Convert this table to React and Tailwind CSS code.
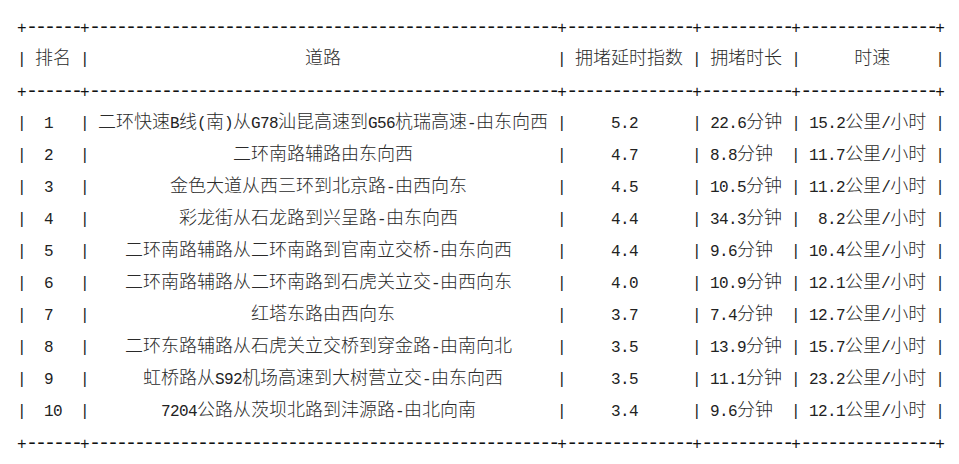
import React from "react";

const rows = [
  ["1", "二环快速B线(南)从G78汕昆高速到G56杭瑞高速-由东向西", "5.2", "22.6分钟", "15.2公里/小时"],
  ["2", "二环南路辅路由东向西", "4.7", "8.8分钟", "11.7公里/小时"],
  ["3", "金色大道从西三环到北京路-由西向东", "4.5", "10.5分钟", "11.2公里/小时"],
  ["4", "彩龙街从石龙路到兴呈路-由东向西", "4.4", "34.3分钟", "8.2公里/小时"],
  ["5", "二环南路辅路从二环南路到官南立交桥-由东向西", "4.4", "9.6分钟", "10.4公里/小时"],
  ["6", "二环南路辅路从二环南路到石虎关立交-由西向东", "4.0", "10.9分钟", "12.1公里/小时"],
  ["7", "红塔东路由西向东", "3.7", "7.4分钟", "12.7公里/小时"],
  ["8", "二环东路辅路从石虎关立交桥到穿金路-由南向北", "3.5", "13.9分钟", "15.7公里/小时"],
  ["9", "虹桥路从S92机场高速到大树营立交-由东向西", "3.5", "11.1分钟", "23.2公里/小时"],
  ["10", "7204公路从茨坝北路到沣源路-由北向南", "3.4", "9.6分钟", "12.1公里/小时"],
];

const widths = [6, 52, 14, 10, 15];

const cw = (ch) => (ch.charCodeAt(0) < 128 ? 1 : 2);
const sw = (s) => [...s].reduce((a, c) => a + cw(c), 0);

const center = (s, W) => {
  const marg = W - sw(s);
  const left = Math.floor(marg / 2) + (marg & W & 1);
  return " ".repeat(left) + s + " ".repeat(marg - left);
};

const header =
  "|" + ["排名", "道路", "拥堵延时指数", "拥堵时长", "时速"].map((s, i) => center(s, widths[i])).join("|") + "|";
const dataLines = rows.map((r) => "|" + r.map((s, i) => center(s, widths[i])).join("|") + "|");

function tokenize(line) {
  const out = [];
  let cur = "";
  let kind = null;
  for (const ch of line) {
    const k = ch.charCodeAt(0) < 128 ? "a" : "c";
    if (k !== kind && cur) {
      out.push([kind, cur]);
      cur = "";
    }
    kind = k;
    cur += ch;
  }
  if (cur) out.push([kind, cur]);
  return out;
}

function Sep() {
  const parts = [];
  parts.push(
    <span key="p0" className="text-[16px] tracking-[-0.6px]">
      +
    </span>
  );
  widths.forEach((w, i) => {
    parts.push(
      <span key={"d" + i} className="text-[20px] tracking-[-3px]">
        {"-".repeat(w)}
      </span>
    );
    parts.push(
      <span key={"p" + (i + 1)} className="text-[16px] tracking-[-0.6px]">
        +
      </span>
    );
  });
  return (
    <div className="h-[32px] leading-[38px] whitespace-pre text-[#111] font-['Liberation_Mono',monospace]">
      {parts}
    </div>
  );
}

function Line({ text }) {
  return (
    <div className="h-[32px] leading-[30px] whitespace-pre text-[#222]">
      {tokenize(text).map(([k, s], i) =>
        k === "a" ? (
          <span key={i} className="font-['Liberation_Mono',monospace] text-[16px] tracking-[-0.6px]">
            {s}
          </span>
        ) : (
          <span key={i} className="font-['Noto_Sans_CJK_SC',sans-serif] text-[18px] font-light text-[#2a2a2a]">
            {s}
          </span>
        )
      )}
    </div>
  );
}

export default function App() {
  return (
    <div className="w-[959px] h-[464px] bg-white pt-[9px] pl-[17px] overflow-hidden">
      <Sep />
      <Line text={header} />
      <Sep />
      {dataLines.map((t, i) => (
        <Line key={i} text={t} />
      ))}
      <Sep />
    </div>
  );
}
